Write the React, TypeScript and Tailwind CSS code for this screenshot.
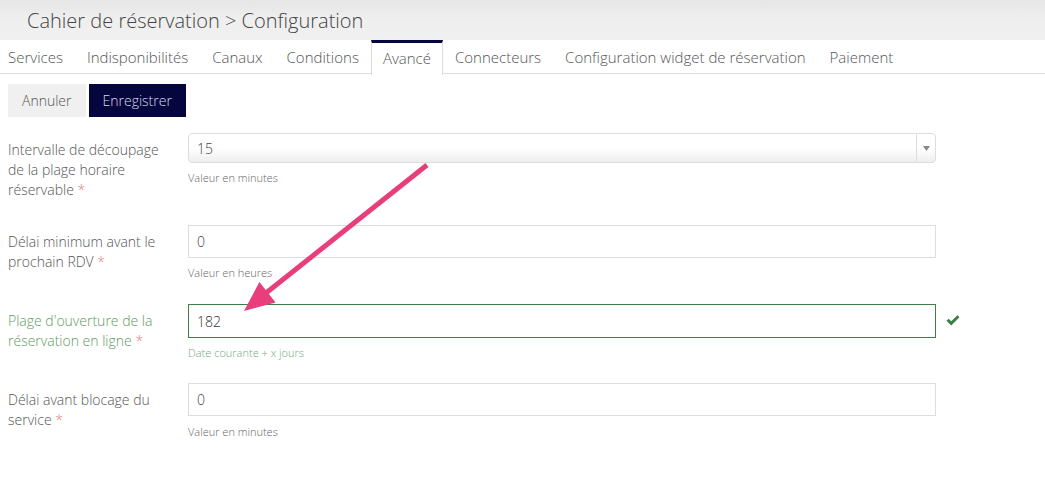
import React from "react";

const tabs = [
  "Services",
  "Indisponibilités",
  "Canaux",
  "Conditions",
  "Avancé",
  "Connecteurs",
  "Configuration widget de réservation",
  "Paiement",
];

function Label({ lines, green }: { lines: string[]; green?: boolean }) {
  return (
    <div
      className={`w-[188px] shrink-0 pl-2 pr-2 text-[14px] leading-[20px] ${
        green ? "text-[#5f9b63]" : "text-[#555]"
      }`}
    >
      {lines.map((l, i) => (
        <div key={i}>
          {l}
          {i === lines.length - 1 && <span className="text-[#e87a7a]"> *</span>}
        </div>
      ))}
    </div>
  );
}

export default function App() {
  return (
    <div
      className="relative w-[1045px] h-[488px] bg-white overflow-hidden font-light"
      style={{ fontFamily: '"Open Sans", "Noto Sans", sans-serif' }}
    >
      <div className="h-[40px] bg-gradient-to-b from-[#e6e6e6] via-[#efefef] to-[#f0f0f0] pl-[27px] flex items-center">
        <h1 className="text-[20px] font-light text-[#444] leading-none mt-px">
          Cahier de réservation &gt; Configuration
        </h1>
      </div>

      <div className="h-[34px] border-b border-[#ddd] flex">
        <div className="flex -ml-1">
          {tabs.map((t) =>
            t === "Avancé" ? (
              <div
                key={t}
                className="relative -mb-px h-[35px] pl-[11px] pr-[11px] bg-white border-x border-[#ddd] border-t-[3px] border-t-[#06063f] flex items-center text-[15px] text-[#555]"
              >
                <span className="-mt-[2px]">{t}</span>
              </div>
            ) : (
              <div
                key={t}
                className="h-[34px] px-3 flex items-center text-[15px] text-[#555]"
              >
                <span className="mt-px">{t}</span>
              </div>
            )
          )}
        </div>
      </div>

      <div className="mt-[10px] ml-2 flex gap-[3px]">
        <button className="h-[33px] px-[14px] bg-[#f0f0f0] text-[14px] text-[#555]">
          Annuler
        </button>
        <button className="h-[33px] px-[14px] bg-[#06063f] text-[14px] text-[#d8d8e6]">
          Enregistrer
        </button>
      </div>

      <div className="mt-[16px]">
        {/* Row 1 */}
        <div className="flex mb-[25px]">
          <div className="pt-[7px]">
            <Label lines={["Intervalle de découpage", "de la plage horaire", "réservable"]} />
          </div>
          <div className="w-[748px]">
            <div className="h-[30px] rounded-[4px] border border-[#ddd] bg-gradient-to-b from-white via-white to-[#eee] flex">
              <div className="flex-1 pl-[8px] flex items-center text-[14px] text-[#444]">15</div>
              <div className="w-[19px] border-l border-[#ddd] flex items-center justify-center">
                <svg width="7" height="5" viewBox="0 0 7 5">
                  <path d="M0 0 H7 L3.5 5 Z" fill="#888" />
                </svg>
              </div>
            </div>
            <div className="mt-[8px] text-[11px] leading-[14px] text-[#666]">Valeur en minutes</div>
          </div>
        </div>

        {/* Row 2 */}
        <div className="flex mb-[24px]">
          <div className="pt-[7px]">
            <Label lines={["Délai minimum avant le", "prochain RDV"]} />
          </div>
          <div className="w-[748px]">
            <div className="h-[33px] border border-[#ddd] pl-[8px] flex items-center text-[14px] text-[#444]">0</div>
            <div className="mt-[8px] text-[11px] leading-[14px] text-[#666]">Valeur en heures</div>
          </div>
        </div>

        {/* Row 3 */}
        <div className="flex mb-[23px]">
          <div className="pt-[7px]">
            <Label green lines={["Plage d'ouverture de la", "réservation en ligne"]} />
          </div>
          <div className="w-[748px]">
            <div className="h-[34px] border border-[#3d7f47] pl-[8px] flex items-center text-[14px] text-[#333]">182</div>
            <div className="mt-[8px] text-[11px] leading-[14px] text-[#74a878]">Date courante + x jours</div>
          </div>
          <div className="pl-[10px] pt-[11px]">
            <svg width="14" height="11" viewBox="0 0 14 11">
              <path d="M0.5 5.8 L2.6 3.7 L5.2 6.3 L11.4 0.2 L13.5 2.3 L5.2 10.6 Z" fill="#3d7f47" />
            </svg>
          </div>
        </div>

        {/* Row 4 */}
        <div className="flex">
          <div className="pt-[7px]">
            <Label lines={["Délai avant blocage du", "service"]} />
          </div>
          <div className="w-[748px]">
            <div className="h-[33px] border border-[#ddd] pl-[8px] flex items-center text-[14px] text-[#444]">0</div>
            <div className="mt-[9px] text-[11px] leading-[14px] text-[#666]">Valeur en minutes</div>
          </div>
        </div>
      </div>

      <svg className="absolute inset-0 pointer-events-none" width="1045" height="488">
        <line x1="427" y1="165" x2="266" y2="293" stroke="#e83e7c" strokeWidth="5" />
        <polygon points="244,311 275.6,302.5 259.4,282.1" fill="#e83e7c" />
      </svg>
    </div>
  );
}
